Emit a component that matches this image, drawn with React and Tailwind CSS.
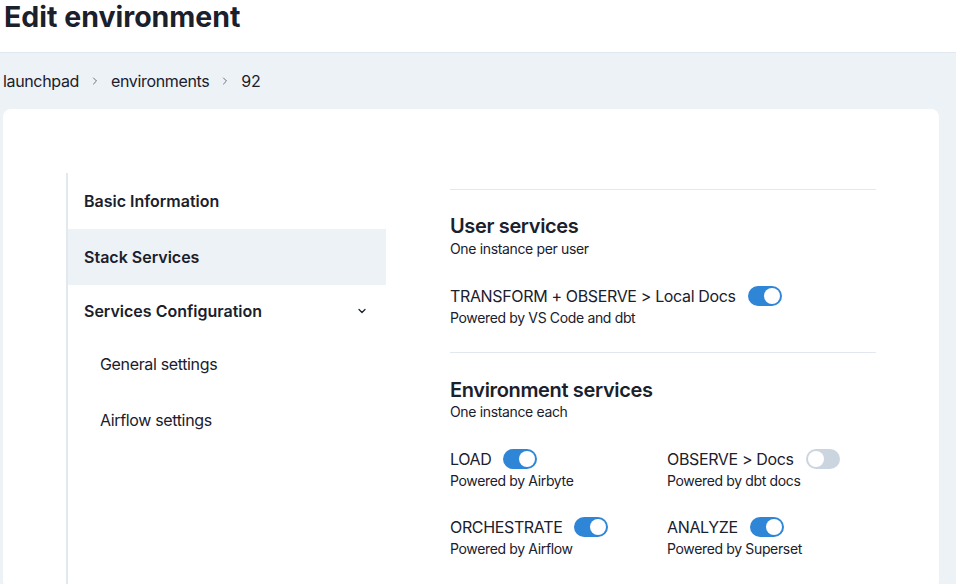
import { ChevronDown, ChevronRight } from 'lucide-react';

const Toggle = ({ on }) => (
  <div
    className={`w-[34px] h-5 rounded-full p-[2px] flex items-center shrink-0 ${
      on ? 'bg-[#2f86d6] justify-end' : 'bg-[#cbd5e0] justify-start'
    }`}
  >
    <div className="w-4 h-4 rounded-full bg-white" />
  </div>
);

const Service = ({ label, sub, on }) => (
  <div>
    <div className="flex items-center gap-3 h-6">
      <span className="text-base">{label}</span>
      <Toggle on={on} />
    </div>
    <p className="text-sm leading-5">{sub}</p>
  </div>
);

const App = () => {
  return (
    <div
      className="min-h-screen bg-[#edf2f7] text-[#1a202c] tracking-[-0.35px]"
      style={{ fontFamily: 'Inter, "Noto Sans", sans-serif' }}
    >
      {/* Header */}
      <header className="h-[53px] bg-white border-b border-[#e2e8f0] px-1 pt-[3px]">
        <h1 className="text-[28.5px] font-bold leading-none tracking-normal">Edit environment</h1>
      </header>

      {/* Breadcrumb */}
      <nav className="flex items-center gap-[10px] px-[3px] pt-4 pb-4 h-[56px] text-base">
        <span>launchpad</span>
        <ChevronRight size={12} className="text-gray-500" />
        <span>environments</span>
        <ChevronRight size={12} className="text-gray-500" />
        <span>92</span>
      </nav>

      {/* Card */}
      <div className="ml-[3px] w-[936px] bg-white rounded-lg pt-16 px-[63px] h-[480px] flex gap-16">
        {/* Sidebar */}
        <aside className="w-[320px] border-l-2 border-[#e2e8f0] shrink-0 self-stretch">
          <div className="h-14 flex items-center px-4 font-semibold tracking-normal">Basic Information</div>
          <div className="h-14 flex items-center px-4 font-semibold tracking-normal bg-[#edf2f7]">Stack Services</div>
          <div className="h-[51px] flex items-center justify-between px-4 font-semibold tracking-normal">
            <span>Services Configuration</span>
            <ChevronDown size={12} strokeWidth={2.5} className="mr-[2px]" />
          </div>
          <div className="h-14 flex items-center pl-8">General settings</div>
          <div className="h-14 flex items-center pl-8">Airflow settings</div>
        </aside>

        {/* Content */}
        <main className="w-[426px] pt-4">
          <section className="border-t border-[#e2e8f0] pt-[22px] pb-6">
            <h2 className="text-xl font-semibold leading-7">User services</h2>
            <p className="text-sm leading-5 -mt-[1px]">One instance per user</p>
            <div className="mt-[25px]">
              <Service label="TRANSFORM + OBSERVE > Local Docs" sub="Powered by VS Code and dbt" on />
            </div>
          </section>
          <section className="border-t border-[#e2e8f0] pt-[23px]">
            <h2 className="text-xl font-semibold leading-7">Environment services</h2>
            <p className="text-sm leading-5 -mt-[2px]">One instance each</p>
            <div className="mt-[25px] grid grid-cols-[217px_1fr] gap-y-6">
              <Service label="LOAD" sub="Powered by Airbyte" on />
              <Service label="OBSERVE > Docs" sub="Powered by dbt docs" on={false} />
              <Service label="ORCHESTRATE" sub="Powered by Airflow" on />
              <Service label="ANALYZE" sub="Powered by Superset" on />
            </div>
          </section>
        </main>
      </div>
    </div>
  );
};

export default App;
